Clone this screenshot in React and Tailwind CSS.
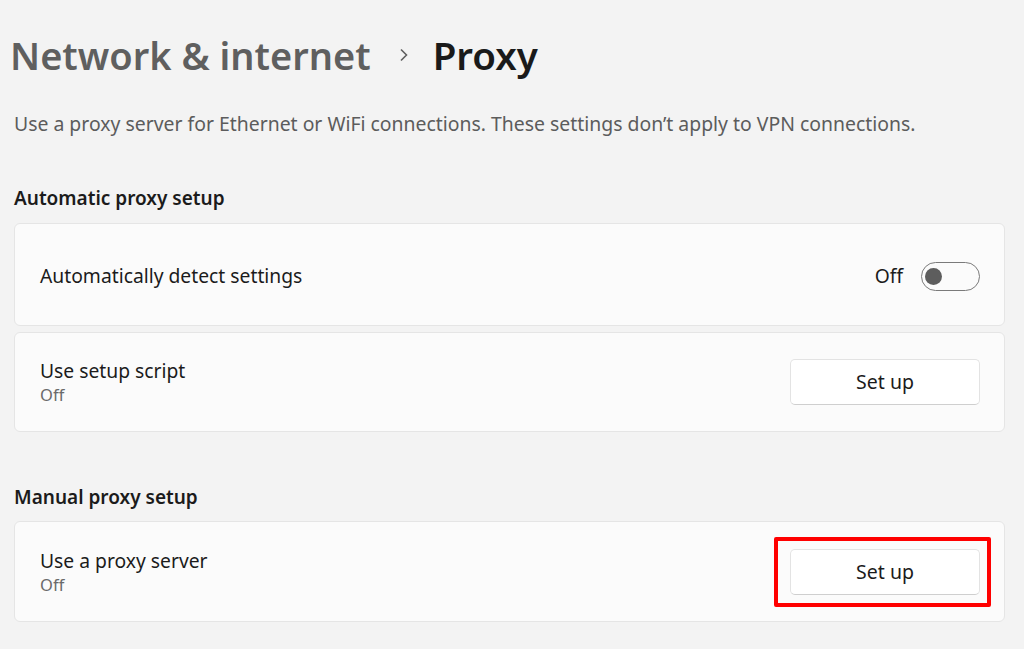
import React from "react";

const font = { fontFamily: '"Noto Sans", "Open Sans", "Liberation Sans", sans-serif' };

function Card({ children, className = "" }) {
  return (
    <div className={`rounded-[6px] border border-[#e5e5e5] bg-[#fbfbfb] flex items-center justify-between pl-[25px] pr-[24px] ${className}`}>
      {children}
    </div>
  );
}

function SetupButton() {
  return (
    <button className="w-[190px] h-[46px] rounded-[5px] border border-[#e3e3e3] border-b-[#cfcfcf] bg-white text-[19.5px] text-[#1b1b1b] flex items-center justify-center">
      Set up
    </button>
  );
}

export default function App() {
  return (
    <div style={font} className="w-[1024px] h-[649px] overflow-hidden bg-[#f3f3f3] pl-[14px] pr-[19px] text-[#1b1b1b]">
      <div className="flex items-center h-[50px] mt-[30px] -ml-[4px]">
        <span className="text-[38px] font-semibold text-[#5f5f5f] leading-none">Network &amp; internet</span>
        <svg className="ml-[27px] mr-[23px]" width="12" height="14" viewBox="0 0 12 14" fill="none">
          <path d="M3 1.5 L8.5 7 L3 12.5" stroke="#5f5f5f" strokeWidth="1.6" />
        </svg>
        <span className="text-[38.5px] font-semibold text-[#1a1a1a] leading-none">Proxy</span>
      </div>
      <p className="mt-[30px] text-[19.4px] text-[#5c5c5c] leading-[28px]">
        Use a proxy server for Ethernet or WiFi connections. These settings don’t apply to VPN connections.
      </p>
      <h2 className="mt-[46px] text-[19px] font-semibold leading-[28px]">Automatic proxy setup</h2>
      <Card className="mt-[11px] h-[103px] pt-[3px]">
        <span className="text-[19.3px]">Automatically detect settings</span>
        <div className="flex items-center">
          <span className="text-[19.3px] mr-[18px]">Off</span>
          <div className="w-[59px] h-[29px] rounded-full border-[1.5px] border-[#7a7a7a] flex items-center pl-[3px]">
            <div className="w-[17px] h-[17px] rounded-full bg-[#5d5d5d]"></div>
          </div>
        </div>
      </Card>
      <Card className="mt-[6px] h-[100px]">
        <div className="flex flex-col">
          <span className="text-[19.3px] leading-[26px]">Use setup script</span>
          <span className="text-[16.5px] leading-[22px] text-[#6a6a6a]">Off</span>
        </div>
        <SetupButton />
      </Card>
      <h2 className="mt-[51px] text-[19px] font-semibold leading-[28px]">Manual proxy setup</h2>
      <Card className="mt-[10px] h-[101px] relative">
        <div className="flex flex-col">
          <span className="text-[19.3px] leading-[26px]">Use a proxy server</span>
          <span className="text-[16.5px] leading-[22px] text-[#6a6a6a]">Off</span>
        </div>
        <div className="relative">
          <SetupButton />
          <div className="absolute left-[-16px] top-[-12px] w-[217px] h-[70px] border-[4px] border-[#ff0000] rounded-[2px]"></div>
        </div>
      </Card>
    </div>
  );
}
